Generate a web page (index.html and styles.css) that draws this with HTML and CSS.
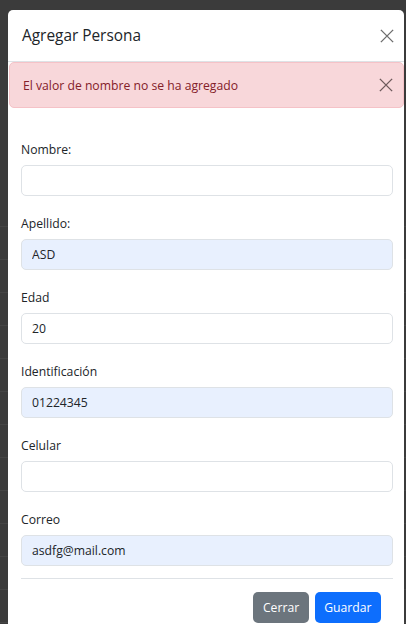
FILE: index.html
```html
<!DOCTYPE html>
<html lang="es">
<head>
<meta charset="utf-8">
<title>Agregar Persona</title>
<link rel="stylesheet" href="styles.css">
</head>
<body>
<div class="modal">
  <div class="modal-header">
    <h5 class="modal-title">Agregar Persona</h5>
    <button class="btn-close" type="button" aria-label="Close">
      <svg viewBox="0 0 16 16" width="14" height="14"><path d="M1 1L15 15M15 1L1 15" stroke="currentColor" stroke-width="1.6" fill="none"/></svg>
    </button>
  </div>
  <div class="alert">
    <span>El valor de nombre no se ha agregado</span>
    <button class="btn-close alert-close" type="button" aria-label="Close">
      <svg viewBox="0 0 16 16" width="14" height="14"><path d="M1 1L15 15M15 1L1 15" stroke="currentColor" stroke-width="1.6" fill="none"/></svg>
    </button>
  </div>
  <form class="modal-body">
    <div class="field">
      <label class="label">Nombre:</label>
      <input class="input" type="text" value="">
    </div>
    <div class="field">
      <label class="label">Apellido:</label>
      <input class="input autofill" type="text" value="ASD">
    </div>
    <div class="field">
      <label class="label">Edad</label>
      <input class="input" type="text" value="20">
    </div>
    <div class="field">
      <label class="label">Identificación</label>
      <input class="input autofill" type="text" value="01224345">
    </div>
    <div class="field">
      <label class="label">Celular</label>
      <input class="input" type="text" value="">
    </div>
    <div class="field field-last">
      <label class="label">Correo</label>
      <input class="input autofill" type="text" value="asdfg@mail.com">
    </div>
    <hr class="divider">
    <div class="footer">
      <button class="btn btn-secondary" type="button">Cerrar</button>
      <button class="btn btn-primary" type="button">Guardar</button>
    </div>
  </form>
</div>
</body>
</html>
```
FILE: styles.css
```css
* { box-sizing: border-box; }
html, body { margin: 0; height: 100%; }
body {
  background-color: #3b3b3b;
  background-image:
    linear-gradient(#3b3b3b, #3b3b3b),
    repeating-linear-gradient(to bottom, #454545 0 1px, #3b3b3b 1px 33px);
  background-size: 100% 226px, 100% 100%;
  background-position: 0 0, 0 226px;
  background-repeat: no-repeat, no-repeat;
  padding: 10px 2px 0 8px;
  overflow: hidden;
  font-family: "Open Sans", "Noto Sans", sans-serif;
  font-size: 12.2px;
  color: #212529;
}
.modal {
  width: 396px;
  min-height: 614px;
  background: #fff;
  border-radius: 5px 5px 0 0;
}
.modal-header {
  height: 52px;
  border-bottom: 1px solid #dee2e6;
  display: flex;
  align-items: center;
  justify-content: space-between;
  padding: 0 10px 0 14px;
}
.modal-title {
  margin: 0;
  font-size: 15.4px;
  font-weight: 500;
  line-height: 19px;
  color: #212529;
}
.btn-close {
  border: 0;
  background: transparent;
  padding: 0;
  width: 14px;
  height: 14px;
  color: #6e6e6e;
  display: flex;
}
.alert {
  height: 46px;
  margin-left: 1px;
  background: #f8d7da;
  border: 1px solid #f5c2c7;
  border-radius: 5px;
  color: #842029;
  display: flex;
  align-items: center;
  justify-content: space-between;
  padding: 0 10px 0 13px;
  line-height: 19px;
}
.alert-close { color: #6e5a5c; }
.modal-body {
  padding: 32px 11px 0 13px;
  display: flex;
  flex-direction: column;
}
.field {
  display: flex;
  flex-direction: column;
  margin-bottom: 18px;
}
.field-last { margin-bottom: 0; }
.label {
  line-height: 19px;
  margin-bottom: 6px;
  color: #212529;
}
.input {
  height: 31px;
  border: 1px solid #dee2e6;
  border-radius: 5px;
  padding: 0 10px;
  font: inherit;
  color: #212529;
  background: #fff;
}
.input.autofill { background: #e8f0fe; }
.divider {
  margin: 12px 0 0;
  border: 0;
  border-top: 1px solid #dee2e6;
}
.footer {
  display: flex;
  justify-content: flex-end;
  gap: 6px;
  padding: 13px 12px 0 0;
}
.btn {
  height: 31px;
  border: 0;
  border-radius: 5px;
  padding: 0 9.5px;
  font: inherit;
  color: #fff;
}
.btn-secondary { background: #6c757d; }
.btn-primary { background: #0d6efd; }
```
